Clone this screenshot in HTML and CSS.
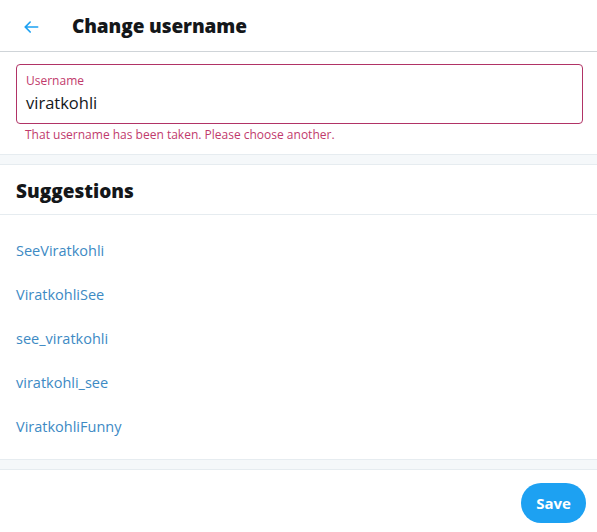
FILE: index.html
```html
<!DOCTYPE html>
<html>
<head>
<meta charset="utf-8">
<link rel="stylesheet" href="styles.css">
</head>
<body>
<div class="page">
  <header class="header">
    <div class="back">
      <svg viewBox="0 0 24 24" width="20" height="20"><path d="M20 11H7.414l4.293-4.293a1 1 0 0 0-1.414-1.414l-6 6a1 1 0 0 0 0 1.414l6 6a.997.997 0 0 0 1.414 0 1 1 0 0 0 0-1.414L7.414 13H20a1 1 0 1 0 0-2z" fill="#1da1f2"/></svg>
    </div>
    <h1 class="title">Change username</h1>
  </header>
  <section class="form">
    <div class="field">
      <div class="label">Username</div>
      <div class="value">viratkohli</div>
    </div>
    <div class="error">That username has been taken. Please choose another.</div>
  </section>
  <div class="band"></div>
  <h2 class="sub">Suggestions</h2>
  <ul class="list">
    <li>SeeViratkohli</li>
    <li>ViratkohliSee</li>
    <li>see_viratkohli</li>
    <li>viratkohli_see</li>
    <li>ViratkohliFunny</li>
  </ul>
  <div class="band"></div>
  <footer class="footer">
    <button class="save">Save</button>
  </footer>
</div>
</body>
</html>
```

FILE: styles.css
```css
* { box-sizing: border-box; }
html, body { margin: 0; padding: 0; background: #fff; }
body { font-family: "Open Sans", "Noto Sans", sans-serif; color: #14171a; }
.page { width: 597px; height: 532px; overflow: hidden; }
.header {
  height: 52px;
  display: flex;
  align-items: center;
  border-bottom: 1px solid #cfd4d8;
}
.back { width: 72px; display: flex; padding-left: 21px; padding-top: 2px; }
.title { margin: 0; font-size: 19px; font-weight: 800; letter-spacing: -0.1px; }
.form { padding: 12px 14px 11px 16px; }
.field {
  border: 1px solid #b13366;
  border-radius: 4px;
  height: 60px;
  padding: 8px 9px 0;
}
.label { font-size: 12px; color: #c13a6c; line-height: 16px; }
.value { font-size: 16.5px; line-height: 24px; margin-top: 2px; color: #14171a; }
.error { font-size: 12px; color: #c13a6c; margin-top: 3px; padding-left: 9px; line-height: 16px; }
.band {
  height: 11px;
  background: #f5f8fa;
  border-top: 1px solid #e6ecf0;
  border-bottom: 1px solid #e6ecf0;
}
.sub {
  margin: 0;
  height: 50px;
  display: flex;
  align-items: center;
  padding: 2px 16px 0;
  font-size: 19px;
  font-weight: 800;
  border-bottom: 1px solid #e6ecf0;
}
.list { list-style: none; margin: 0; padding: 13px 0 11px; }
.list li {
  height: 44px;
  display: flex;
  align-items: center;
  padding-left: 16px;
  font-size: 14.5px;
  color: #3d8ac4;
}
.footer { display: flex; justify-content: flex-end; padding: 13px 11px 0 0; }
.save {
  width: 65px;
  height: 40px;
  border: 0;
  border-radius: 20px;
  background: #1da1f2;
  color: #fff;
  font-family: inherit;
  font-size: 15px;
  font-weight: 700;
}
```
